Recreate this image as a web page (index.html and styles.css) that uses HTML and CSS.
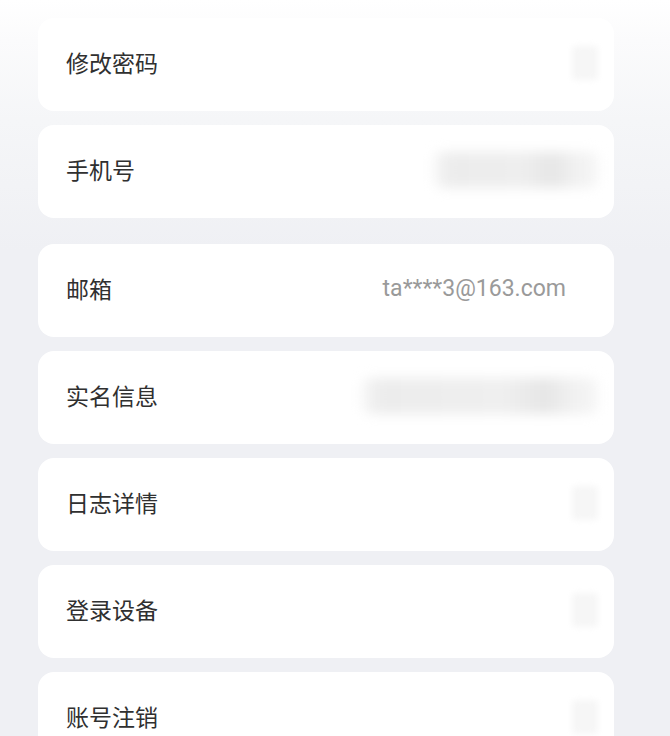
FILE: index.html
```html
<!DOCTYPE html>
<html lang="zh-CN">
<head>
<meta charset="utf-8">
<title>账号与安全</title>
<link rel="stylesheet" href="styles.css">
</head>
<body>
<div class="page">
  <div class="group">
    <div class="row">
      <span class="label">修改密码</span>
      <span class="arrow"></span>
    </div>
    <div class="row">
      <span class="label">手机号</span>
      <span class="redact redact-phone"></span>
    </div>
  </div>
  <div class="group">
    <div class="row">
      <span class="label">邮箱</span>
      <span class="value">ta****3@163.com</span>
    </div>
    <div class="row">
      <span class="label">实名信息</span>
      <span class="redact redact-id"></span>
    </div>
    <div class="row">
      <span class="label">日志详情</span>
      <span class="arrow"></span>
    </div>
    <div class="row">
      <span class="label">登录设备</span>
      <span class="arrow"></span>
    </div>
    <div class="row">
      <span class="label">账号注销</span>
      <span class="arrow"></span>
    </div>
  </div>
</div>
</body>
</html>
```

FILE: styles.css
```css
html, body {
  margin: 0;
  padding: 0;
}
body {
  width: 670px;
  min-height: 736px;
  background: linear-gradient(180deg, #ffffff 0px, #fbfbfc 40px, #f5f6f8 120px, #eff0f4 250px, #eff0f4 100%);
  font-family: Roboto, "Noto Sans CJK SC", sans-serif;
  overflow: hidden;
}
.page {
  padding: 18px 56px 0 38px;
  display: flex;
  flex-direction: column;
  gap: 26px;
}
.group {
  display: flex;
  flex-direction: column;
  gap: 14px;
}
.row {
  height: 93px;
  background: #ffffff;
  border-radius: 16px;
  display: flex;
  align-items: center;
  justify-content: space-between;
  padding: 0 16px 0 28px;
  box-sizing: border-box;
}
.label {
  font-family: "Noto Sans CJK SC", sans-serif;
  font-size: 23px;
  line-height: 32px;
  color: #303030;
  margin-bottom: 6px;
}
.value {
  font-family: Roboto, sans-serif;
  font-size: 23px;
  line-height: 32px;
  color: #9a9a9a;
  margin-right: 32px;
  margin-bottom: 4px;
}
.arrow {
  width: 26px;
  height: 34px;
  background: #f6f6f6;
  border-radius: 4px;
  filter: blur(3px);
  margin-bottom: 4px;
}
.redact {
  height: 36px;
  border-radius: 8px;
  filter: blur(6px);
  margin-bottom: 4px;
}
.redact-phone {
  width: 164px;
  margin-right: 0;
  background: linear-gradient(90deg, #f6f6f6 0%, #ececec 10%, #eeeeee 55%, #e6e6e6 72%, #f0f0f0 85%, #f6f6f6 100%);
}
.redact-id {
  width: 236px;
  margin-right: 0;
  background: linear-gradient(90deg, #f6f6f6 0%, #ececec 8%, #efefef 60%, #e6e6e6 78%, #f0f0f0 88%, #f6f6f6 100%);
}
```
